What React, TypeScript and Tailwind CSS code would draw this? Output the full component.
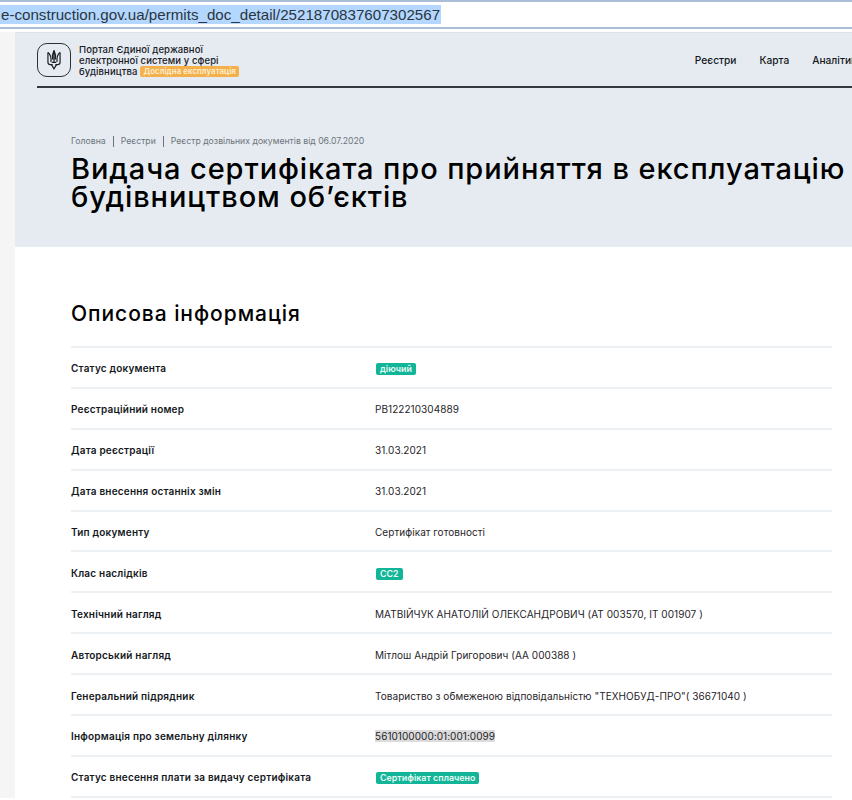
const FONT = "font-['Inter','Noto_Sans',sans-serif]"

const rows: { label: string; value: string; kind?: "badge" | "selected" }[] = [
  { label: "Статус документа", value: "діючий", kind: "badge" },
  { label: "Реєстраційний номер", value: "РВ122210304889" },
  { label: "Дата реєстрації", value: "31.03.2021" },
  { label: "Дата внесення останніх змін", value: "31.03.2021" },
  { label: "Тип документу", value: "Сертифікат готовності" },
  { label: "Клас наслідків", value: "СС2", kind: "badge" },
  { label: "Технічний нагляд", value: "МАТВІЙЧУК АНАТОЛІЙ ОЛЕКСАНДРОВИЧ (АТ 003570, ІТ 001907 )" },
  { label: "Авторський нагляд", value: "Мітлош Андрій Григорович (АА 000388 )" },
  { label: "Генеральний підрядник", value: "Товариство з обмеженою відповідальністю \"ТЕХНОБУД-ПРО\"( 36671040 )" },
  { label: "Інформація про земельну ділянку", value: "5610100000:01:001:0099", kind: "selected" },
  { label: "Статус внесення плати за видачу сертифіката", value: "Сертифікат сплачено", kind: "badge" },
]

function Trident() {
  return (
    <svg width="14" height="21" viewBox="0 0 15 22" fill="none" stroke="#1a2026" strokeWidth="1.300">
      <path d="M7.500 1v13M7.500 1C6 4 5.500 7 6 11M7.500 1C9 4 9.500 7 9 11" />
      <path d="M1 3.500V14c0 1.800 1 2.500 2.500 2.500H6M14 3.500V14c0 1.800-1 2.500-2.500 2.500H9" />
      <path d="M1 3.500c2.500 2 3.800 5.500 3.200 10M14 3.500c-2.500 2-3.800 5.500-3.200 10" />
      <path d="M4.800 16.500L7.500 21l2.700-4.500M5 14h5" />
    </svg>
  )
}

export default function App() {
  return (
    <div className={`h-[800px] w-[852px] overflow-hidden bg-white ${FONT}`}>
      {/* address bar */}
      <div className="flex h-[29px] items-start border-y-2 border-[#a9bdd6] bg-white pt-[3px]">
        <span className="bg-[#b3d7fe] pl-[1px] pr-[1px] font-['Liberation_Sans',sans-serif] text-[15.150px] leading-[19px] whitespace-nowrap text-[#2b3540]">
          e-construction.gov.ua/permits_doc_detail/2521870837607302567
        </span>
      </div>

      <div className="mt-[3px] flex">
        <div className="w-[15px] shrink-0 bg-[#f5f5f5]" />
        <div className="min-w-0 flex-1">
          <div className="h-[215px] overflow-hidden border-t border-[#dfe3e8] bg-[#e5ebf1] pl-[22px]">
            <header className="flex h-[55px] w-[900px] items-center border-b-2 border-[#33383d]">
              <div className="flex h-[34px] w-[34px] items-center justify-center rounded-[10px] border border-[#2b3037]">
                <Trident />
              </div>
              <div className="ml-[8px] pt-[2px] text-[9.500px] leading-[11.200px] font-medium tracking-[0.1px] text-[#1a2026]">
                <div>Портал Єдиної державної</div>
                <div>електронної системи у сфері</div>
                <div className="flex items-center">
                  будівництва
                  <span className="ml-[3px] rounded-[2px] bg-[#f4b04a] px-[3px] text-[7.800px] leading-[11px] font-semibold text-[#fdf1d8]">
                    Дослідна експлуатація
                  </span>
                </div>
              </div>
              <nav className="ml-[456px] flex gap-[23px] pt-[2px] text-[10.200px] font-medium text-[#14181c]">
                <span>Реєстри</span>
                <span>Карта</span>
                <span>Аналітика</span>
              </nav>
            </header>

            <div className="ml-[34px] mt-[47px] flex items-center text-[8.700px] leading-[12px] text-[#6d747b]">
              <span>Головна</span>
              <span className="mx-[7px] h-[11px] w-px bg-[#6d747b]" />
              <span>Реєстри</span>
              <span className="mx-[7px] h-[11px] w-px bg-[#6d747b]" />
              <span>Реєстр дозвільних документів від 06.07.2020</span>
            </div>
            <h1 className="ml-[34px] mt-[8px] w-[1000px] text-[29px] leading-[28px] font-medium tracking-[0.9px] text-black">
              Видача сертифіката про прийняття в експлуатацію
              <br />
              будівництвом об’єктів
            </h1>
          </div>

          <main className="pl-[56px] pr-[20px] pt-[55px]">
            <h2 className="text-[21px] leading-[24px] font-medium tracking-[0.95px] text-black">Описова інформація</h2>
            <div className="mt-[20px] border-t-2 border-[#eef1f3]">
              {rows.map((r) => (
                <div key={r.label} className="flex h-[40.900px] items-center border-b-2 border-[#eef1f3] pt-[3px]">
                  <div className="w-[304px] shrink-0 text-[10px] font-semibold tracking-[0.2px] text-[#14181c]">{r.label}</div>
                  <div className="text-[10px] tracking-[0.05px] text-[#1f2429]">
                    {r.kind === "badge" ? (
                      <span className="ml-px inline-block rounded-[2px] bg-[#12b598] px-[4px] text-[8.800px] leading-[12px] font-semibold text-[#eafaf6]">
                        {r.value}
                      </span>
                    ) : r.kind === "selected" ? (
                      <span className="bg-[#dcdcdc]">{r.value}</span>
                    ) : (
                      r.value
                    )}
                  </div>
                </div>
              ))}
            </div>
          </main>
        </div>
      </div>
    </div>
  )
}
